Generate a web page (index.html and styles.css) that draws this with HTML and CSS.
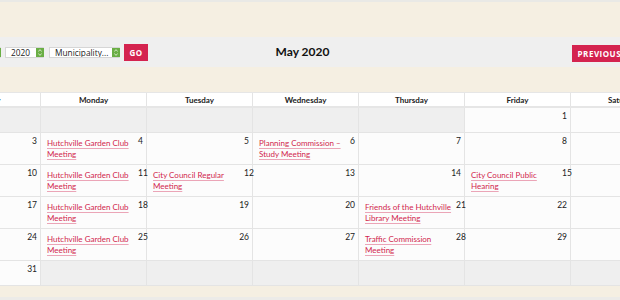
FILE: index.html
```html
<!DOCTYPE html>
<html>
<head>
<meta charset="utf-8">
<link rel="stylesheet" href="styles.css">
</head>
<body>
<div class="topline"></div>
<main class="page">
  <div class="wrap">
    <div class="bar">
      <form class="filters">
        <span class="sel sel-month"><span class="sel-text">May</span><svg class="arr" width="8" height="11" viewBox="0 0 8 11"><rect width="8" height="11" fill="#6aae45"/><path d="M2.3 4.3 L4 2.7 L5.7 4.3 M2.3 6.7 L4 8.3 L5.7 6.7" stroke="#e8f3df" stroke-width="0.9" fill="none"/></svg></span>
        <span class="sel sel-year"><span class="sel-text">2020</span><svg class="arr" width="8" height="11" viewBox="0 0 8 11"><rect width="8" height="11" fill="#6aae45"/><path d="M2.3 4.3 L4 2.7 L5.7 4.3 M2.3 6.7 L4 8.3 L5.7 6.7" stroke="#e8f3df" stroke-width="0.9" fill="none"/></svg></span>
        <span class="sel sel-muni"><span class="sel-text">Municipality...</span><svg class="arr" width="8" height="11" viewBox="0 0 8 11"><rect width="8" height="11" fill="#6aae45"/><path d="M2.3 4.3 L4 2.7 L5.7 4.3 M2.3 6.7 L4 8.3 L5.7 6.7" stroke="#e8f3df" stroke-width="0.9" fill="none"/></svg></span>
        <button type="button" class="btn btn-go">GO</button>
      </form>
      <h2 class="title">May 2020</h2>
      <nav class="nav">
        <a class="btn btn-nav">PREVIOUS</a>
        <a class="btn btn-nav">NEXT</a>
      </nav>
    </div>
    <table class="cal">
      <thead>
        <tr><th>Sunday</th><th>Monday</th><th>Tuesday</th><th>Wednesday</th><th>Thursday</th><th>Friday</th><th>Saturday</th></tr>
      </thead>
      <tbody>
        <tr class="short">
          <td class="off"></td><td class="off"></td><td class="off"></td><td class="off"></td><td class="off"></td>
          <td><div class="day"><span class="num">1</span></div></td>
          <td><div class="day"><span class="num">2</span></div></td>
        </tr>
        <tr class="wk">
          <td><div class="day"><span class="num">3</span></div></td>
          <td><div class="day"><div class="ev"><a href="#">Hutchville Garden Club Meeting</a></div><span class="num">4</span></div></td>
          <td><div class="day"><span class="num">5</span></div></td>
          <td><div class="day"><div class="ev"><a href="#">Planning Commission – Study Meeting</a></div><span class="num">6</span></div></td>
          <td><div class="day"><span class="num">7</span></div></td>
          <td><div class="day"><span class="num">8</span></div></td>
          <td><div class="day"><span class="num">9</span></div></td>
        </tr>
        <tr class="wk">
          <td><div class="day"><span class="num">10</span></div></td>
          <td><div class="day"><div class="ev"><a href="#">Hutchville Garden Club Meeting</a></div><span class="num">11</span></div></td>
          <td><div class="day"><div class="ev"><a href="#">City Council Regular Meeting</a></div><span class="num">12</span></div></td>
          <td><div class="day"><span class="num">13</span></div></td>
          <td><div class="day"><span class="num">14</span></div></td>
          <td><div class="day"><div class="ev"><a href="#">City Council Public Hearing</a></div><span class="num">15</span></div></td>
          <td><div class="day"><span class="num">16</span></div></td>
        </tr>
        <tr class="wk">
          <td><div class="day"><span class="num">17</span></div></td>
          <td><div class="day"><div class="ev"><a href="#">Hutchville Garden Club Meeting</a></div><span class="num">18</span></div></td>
          <td><div class="day"><span class="num">19</span></div></td>
          <td><div class="day"><span class="num">20</span></div></td>
          <td><div class="day"><div class="ev"><a href="#">Friends of the Hutchville Library Meeting</a></div><span class="num">21</span></div></td>
          <td><div class="day"><span class="num">22</span></div></td>
          <td><div class="day"><span class="num">23</span></div></td>
        </tr>
        <tr class="wk">
          <td><div class="day"><span class="num">24</span></div></td>
          <td><div class="day"><div class="ev"><a href="#">Hutchville Garden Club Meeting</a></div><span class="num">25</span></div></td>
          <td><div class="day"><span class="num">26</span></div></td>
          <td><div class="day"><span class="num">27</span></div></td>
          <td><div class="day"><div class="ev"><a href="#">Traffic Commission Meeting</a></div><span class="num">28</span></div></td>
          <td><div class="day"><span class="num">29</span></div></td>
          <td><div class="day"><span class="num">30</span></div></td>
        </tr>
        <tr class="short">
          <td><div class="day"><span class="num">31</span></div></td>
          <td class="off"></td><td class="off"></td><td class="off"></td><td class="off"></td><td class="off"></td><td class="off"></td>
        </tr>
      </tbody>
    </table>
  </div>
  <div class="footer"></div>
</main>
</body>
</html>
```

FILE: styles.css
```css
html, body {
  margin: 0;
  padding: 0;
}
body {
  background: #f5efe2;
  font-family: Lato, "Open Sans", "Liberation Sans", sans-serif;
  color: #222;
  overflow: hidden;
  width: 620px;
  height: 300px;
}
.topline {
  height: 2px;
  background: #e9e9e6;
}
.page {
  padding-top: 35px;
}
.wrap {
  width: 743px;
  margin-left: -66px;
}
.bar {
  height: 30px;
  background: #efefef;
  display: grid;
  grid-template-columns: 1fr auto 1fr;
  align-items: center;
  padding: 0 11px 0 10px;
}
.filters {
  display: flex;
  align-items: center;
  gap: 4px;
  margin: 0;
  justify-self: start;
}
.sel {
  display: flex;
  align-items: center;
  justify-content: space-between;
  height: 11px;
  background: #fff;
  border: 1px solid #d6d6d6;
  border-right: none;
  border-radius: 1px;
  font-family: "Open Sans", "Liberation Sans", sans-serif;
  font-size: 8.3px;
  line-height: 11px;
  color: #222;
  box-sizing: border-box;
  overflow: hidden;
}
.sel-text {
  padding-left: 5px;
}
.arr {
  display: block;
  flex: none;
}
.sel-month { width: 57px; }
.sel-year { width: 39px; }
.sel-muni { width: 71px; margin-left: 1px; }
.btn {
  display: inline-flex;
  align-items: center;
  justify-content: center;
  background: #d4234f;
  color: #fff;
  font-family: "Open Sans", "Liberation Sans", sans-serif;
  font-weight: 700;
  font-size: 8px;
  letter-spacing: 0.5px;
  border: none;
  height: 17px;
  padding: 0 6px;
  box-sizing: border-box;
  text-decoration: none;
}
.btn-go {
  width: 24px;
  padding: 0;
  margin-top: 1px;
}
.title {
  margin: 0 5px 0 0;
  font-size: 12px;
  font-weight: 700;
  color: #111;
  padding-bottom: 2px;
}
.nav {
  justify-self: end;
  display: flex;
  gap: 4px;
  margin-top: 2px;
}
.cal {
  margin-top: 25px;
  width: 743px;
  border-collapse: collapse;
  table-layout: fixed;
  font-size: 8.5px;
}
.cal th {
  background: #fff;
  height: 13px;
  padding: 0;
  font-weight: 700;
  font-size: 8px;
  color: #222;
  border-left: 1px solid #e4e4e4;
  border-bottom: 2px solid #e6e6e6;
  border-top: 1px solid #e6e6e6;
  line-height: 12px;
}
.cal td {
  background: #fcfcfc;
  border: 1px solid #e4e4e4;
  vertical-align: top;
  padding: 3px 3px 0 6px;
}
.cal td.off {
  background: #efefef;
}
.cal tr.short td { height: 21px; }
.cal tr.wk td { height: 28px; }
.day {
  display: flex;
  align-items: flex-start;
}
.ev {
  flex: 0 0 91px;
  padding-top: 2px;
  line-height: 11px;
  font-size: 8px;
}
.ev a {
  color: #d11f4d;
  text-decoration: underline;
  text-decoration-color: #eba5b7;
  text-underline-offset: 1.5px;
}
.num {
  margin-left: auto;
  line-height: 11px;
  color: #222;
}
.footer {
  margin-top: 11px;
  height: 4px;
  background: #ecebe8;
}
```
